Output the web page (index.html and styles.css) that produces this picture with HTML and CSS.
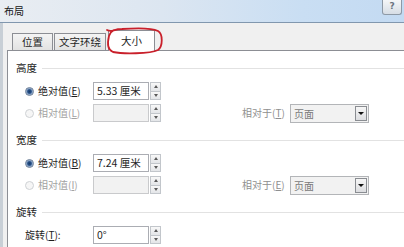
FILE: index.html
```html
<!DOCTYPE html>
<html lang="zh-CN">
<head>
<meta charset="utf-8">
<title>布局</title>
<link rel="stylesheet" href="styles.css">
</head>
<body>
<div class="window">
  <header class="titlebar">
    <span class="title">布局</span>
    <span class="help">?</span>
  </header>
  <div class="body">
    <nav class="tabs">
      <span class="tab tab-pos">位置</span>
      <span class="tab tab-wrap">文字环绕</span>
      <span class="tab tab-size active">大小</span>
    </nav>
    <section class="panel">
      <div class="group">
        <div class="group-head"><span>高度</span></div>
        <div class="row">
          <span class="opt"><i class="radio on"></i><span class="lbl">绝对值(<u>E</u>)</span></span>
          <span class="input">5.33 厘米</span>
          <span class="spin"><b class="up"></b><b class="down"></b></span>
        </div>
        <div class="row">
          <span class="opt disabled"><i class="radio"></i><span class="lbl">相对值(<u>L</u>)</span></span>
          <span class="input off"></span>
          <span class="spin"><b class="up"></b><b class="down"></b></span>
          <span class="rel"><span class="rel-label">相对于(<u>T</u>)</span><span class="select"><span class="select-text">页面</span><span class="arrow"></span></span></span>
        </div>
      </div>
      <div class="group">
        <div class="group-head"><span>宽度</span></div>
        <div class="row">
          <span class="opt"><i class="radio on"></i><span class="lbl">绝对值(<u>B</u>)</span></span>
          <span class="input">7.24 厘米</span>
          <span class="spin"><b class="up"></b><b class="down"></b></span>
        </div>
        <div class="row">
          <span class="opt disabled"><i class="radio"></i><span class="lbl">相对值(<u>I</u>)</span></span>
          <span class="input off"></span>
          <span class="spin"><b class="up"></b><b class="down"></b></span>
          <span class="rel"><span class="rel-label">相对于(<u>E</u>)</span><span class="select"><span class="select-text">页面</span><span class="arrow"></span></span></span>
        </div>
      </div>
      <div class="group">
        <div class="group-head"><span>旋转</span></div>
        <div class="row">
          <span class="opt plain"><span class="lbl">旋转(<u>T</u>):</span></span>
          <span class="input">0°</span>
          <span class="spin"><b class="up"></b><b class="down"></b></span>
        </div>
      </div>
    </section>
  </div>
  <svg class="mark" width="404" height="60" viewBox="0 0 404 60" aria-hidden="true">
    <path d="M107,30 C112,33 113,29 122,29 C135,28 152,28 158,31 C163,34 163,46 158,50 C150,54 122,54 113,52 C108,50 107,44 109,36 C110,33 112,31 114,30" fill="none" stroke="#c9202b" stroke-width="1.8" stroke-linecap="round"/>
  </svg>
</div>
</body>
</html>
```

FILE: styles.css
```css
* { box-sizing: border-box; margin: 0; padding: 0; }
html, body { width: 404px; height: 247px; overflow: hidden; }
body {
  font: 10px/14px "Noto Sans CJK SC", "Microsoft YaHei", sans-serif;
  color: #1e1e1e;
  background: #f0f0f0;
}
u { text-decoration: underline; text-underline-offset: 1px; }
.lbl { white-space: nowrap; }

.window { position: relative; display: flex; flex-direction: column; height: 247px; }

.titlebar {
  height: 23px;
  display: flex;
  align-items: flex-start;
  background: linear-gradient(to right, #e9edf2 0%, #dce6f1 40%, #c9def3 75%, #c3daf2 100%);
  border-bottom: 1px solid #8197ae;
}
.title { padding: 4px 0 0 4px; font-size: 10px; line-height: 14px; color: #151515; }
.help {
  margin-left: auto;
  margin-right: 2px;
  width: 20px;
  height: 15px;
  border: 1px solid #8d99a6;
  border-top: none;
  border-radius: 0 0 3px 3px;
  background: linear-gradient(#f4f6f8, #d6dde5);
  font: bold 9px/13px "DejaVu Sans", sans-serif;
  color: #6a7480;
  text-align: center;
}

.body { flex: 1; display: flex; flex-direction: column; border-left: 3px solid #c8cfd6; }

.tabs { height: 27px; display: flex; align-items: flex-end; padding-left: 9px; }
.tab {
  height: 17px;
  border: 1px solid #8c8e94;
  border-bottom: none;
  background: linear-gradient(#f4f4f4, #e2e2e2);
  font-size: 10.5px;
  line-height: 15px;
  color: #1e1e1e;
}
.tab-pos { padding: 0 9px; }
.tab-wrap { padding: 0 4px; margin-left: 1px; }
.tab-size { padding: 0 12px; margin-left: 2px; }
.tab.active {
  height: 21px;
  margin-bottom: -1px;
  background: #fff;
  line-height: 19px;
  position: relative;
  z-index: 1;
}

.panel {
  flex: 1;
  margin-left: 4px;
  border-left: 1px solid #8c8e94;
  border-top: 1px solid #8c8e94;
  background: #fff;
  padding: 10px 0 0 8px;
  display: flex;
  flex-direction: column;
  gap: 11px;
}

.group { display: flex; flex-direction: column; gap: 4px; }
.group-head { height: 14px; display: flex; align-items: center; gap: 5px; margin-bottom: 3px; color: #1e1e1e; font-size: 10.5px; }
.group-head::after { content: ""; flex: 1; height: 1px; background: #e2e2e2; }

.row { height: 18px; display: flex; align-items: center; }
.opt { width: 77px; display: flex; align-items: center; gap: 4px; padding-left: 9px; color: #1e1e1e; }
.opt.disabled { color: #a3a3a3; }
.radio {
  flex: none;
  width: 9px; height: 9px; border-radius: 50%;
  border: 1px solid #8f9499;
  background: radial-gradient(circle, #ffffff 0, #e0e0e0 100%);
}
.radio.on {
  border-color: #6c7f98;
  background: radial-gradient(circle, #163a6a 0, #264f86 1.8px, #7e9bc0 2.8px, #dfe8f2 4.5px);
}
.disabled .radio { border-color: #cfd2d5; background: #f6f6f6; }

.input {
  width: 56px; height: 18px;
  border: 1px solid #abadb3;
  background: #fff;
  padding-left: 3px;
  line-height: 16px;
  font-size: 10.5px;
  color: #1e1e1e;
  white-space: nowrap;
}
.input.off { background: #f2f2f2; border-color: #c9cacc; }

.spin { margin-left: 1px; width: 11px; height: 18px; display: flex; flex-direction: column; }
.spin b {
  flex: 1;
  border: 1px solid #c2c6cb;
  background: linear-gradient(#f8f8f8, #e3e5e8);
  display: flex; align-items: center; justify-content: center;
}
.spin b + b { border-top: none; }
.spin .up::after { content: ""; border-left: 2.5px solid transparent; border-right: 2.5px solid transparent; border-bottom: 3px solid #5a5a5a; }
.spin .down::after { content: ""; border-left: 2.5px solid transparent; border-right: 2.5px solid transparent; border-top: 3px solid #5a5a5a; }

.rel { margin-left: 81px; display: flex; align-items: center; gap: 3px; }
.rel-label { width: 45px; white-space: nowrap; color: #8f8f8f; }
.select {
  width: 79px; height: 19px;
  border: 1px solid #b3b5b8;
  background: #f2f2f2;
  display: flex; align-items: stretch;
}
.select-text { flex: 1; padding-left: 3px; line-height: 17px; color: #7a7a7a; }
.arrow {
  width: 12px; margin: 1px;
  border: 1px solid #8a8d92;
  background: linear-gradient(#f6f6f6, #dcdde0);
  display: flex; align-items: center; justify-content: center;
}
.arrow::after { content: ""; border-left: 3px solid transparent; border-right: 3px solid transparent; border-top: 3px solid #111; }

.plain { padding-left: 9px; }

.mark { position: absolute; left: 0; top: 0; pointer-events: none; z-index: 5; }
```
